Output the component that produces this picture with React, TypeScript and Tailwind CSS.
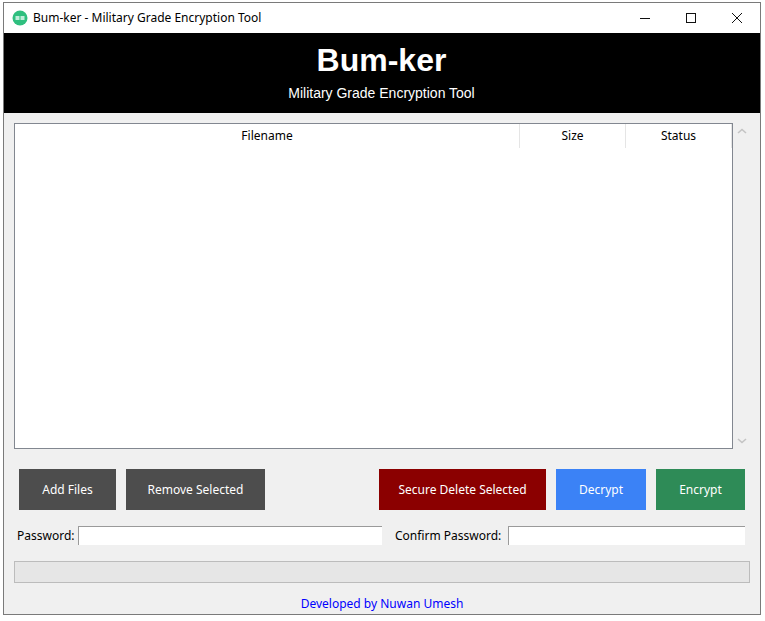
const font = { fontFamily: '"Noto Sans", "Liberation Sans", sans-serif' };

function Btn({ label, cls }: { label: string; cls: string }) {
  return (
    <div className={`h-[41px] flex items-center justify-center text-[12px] text-white ${cls}`}>{label}</div>
  );
}

export default function App() {
  return (
    <div className="w-[765px] h-[621px] bg-white pl-[3px] pt-[2px] overflow-hidden" style={font}>
      <div className="w-[758px] h-[613px] border border-[#7a7a7a] bg-[#f0f0f0] flex flex-col">
        <div className="h-[30px] bg-white flex items-center shrink-0">
          <svg className="ml-[8px] w-[16px] h-[16px]" viewBox="0 0 16 16">
            <circle cx="8" cy="8" r="7.5" fill="#2fbf7f" />
            <rect x="3.5" y="6" width="9" height="4" fill="#bfeedb" />
            <rect x="7.5" y="5.5" width="1" height="5" fill="#2fbf7f" />
          </svg>
          <span className="ml-[5px] text-[12px] text-black">Bum-ker - Military Grade Encryption Tool</span>
          <div className="ml-auto flex items-center">
            <svg className="w-[46px] h-[30px]" viewBox="0 0 46 30">
              <rect x="18" y="15" width="10" height="1" fill="#111" />
            </svg>
            <svg className="w-[46px] h-[30px]" viewBox="0 0 46 30">
              <rect x="18.5" y="10.5" width="9" height="9" fill="none" stroke="#111" />
            </svg>
            <svg className="w-[46px] h-[30px]" viewBox="0 0 46 30">
              <path d="M18 10 L28 20 M28 10 L18 20" stroke="#111" strokeWidth="1" fill="none" />
            </svg>
          </div>
        </div>
        <div className="h-[80px] bg-black flex flex-col items-center shrink-0 pr-[1px] text-white">
          <div className="mt-[7px] text-[32px] leading-[40px] font-bold" style={{ fontFamily: '"Liberation Sans", sans-serif' }}>Bum-ker</div>
          <div className="mt-[3px] text-[14px] leading-[20px]" style={{ fontFamily: '"Liberation Sans", sans-serif' }}>Military Grade Encryption Tool</div>
        </div>
        <div className="flex flex-col flex-1 px-[10px] pt-[10px]">
          <div className="flex h-[326px] shrink-0">
            <div className="w-[719px] border border-[#828790] bg-white">
              <div className="flex h-[24px] text-[12px] text-black">
                <div className="w-[505px] flex items-center justify-center border-r border-[#e5e5e5]">Filename</div>
                <div className="w-[106px] flex items-center justify-center border-r border-[#e5e5e5]">Size</div>
                <div className="w-[106px] flex items-center justify-center border-r border-[#e5e5e5]">Status</div>
              </div>
            </div>
            <div className="w-[17px] flex flex-col items-center justify-between py-[5px]">
              <svg className="w-[10px] h-[6px]" viewBox="0 0 10 6"><path d="M1 5 L5 1.5 L9 5" stroke="#c4c4c4" strokeWidth="1.6" fill="none" /></svg>
              <svg className="w-[10px] h-[6px]" viewBox="0 0 10 6"><path d="M1 1 L5 4.5 L9 1" stroke="#c4c4c4" strokeWidth="1.6" fill="none" /></svg>
            </div>
          </div>
          <div className="flex mt-[20px] pl-[5px] gap-[10px]">
            <Btn label="Add Files" cls="w-[97px] bg-[#4d4d4d]" />
            <Btn label="Remove Selected" cls="w-[139px] bg-[#4d4d4d]" />
            <Btn label="Secure Delete Selected" cls="w-[167px] bg-[#8b0000] ml-[104px]" />
            <Btn label="Decrypt" cls="w-[90px] bg-[#3b82f6]" />
            <Btn label="Encrypt" cls="w-[89px] bg-[#2e8b57]" />
          </div>
          <div className="flex items-center mt-[16px] h-[19px] text-[12px] text-black">
            <span className="ml-[3px] w-[61px]">Password:</span>
            <div className="w-[304px] h-[19px] bg-white border-t border-l border-[#9a9a9a]" />
            <span className="ml-[13px] w-[113px]">Confirm Password:</span>
            <div className="w-[237px] h-[19px] bg-white border-t border-l border-[#9a9a9a]" />
          </div>
          <div className="mt-[16px] h-[22px] w-[736px] bg-[#e6e6e6] border border-[#bcbcbc]" />
          <div className="mt-[13px] w-[736px] text-center text-[12px] leading-[16px] text-[#0000ff] pl-[0px]">Developed by Nuwan Umesh</div>
        </div>
      </div>
    </div>
  );
}
